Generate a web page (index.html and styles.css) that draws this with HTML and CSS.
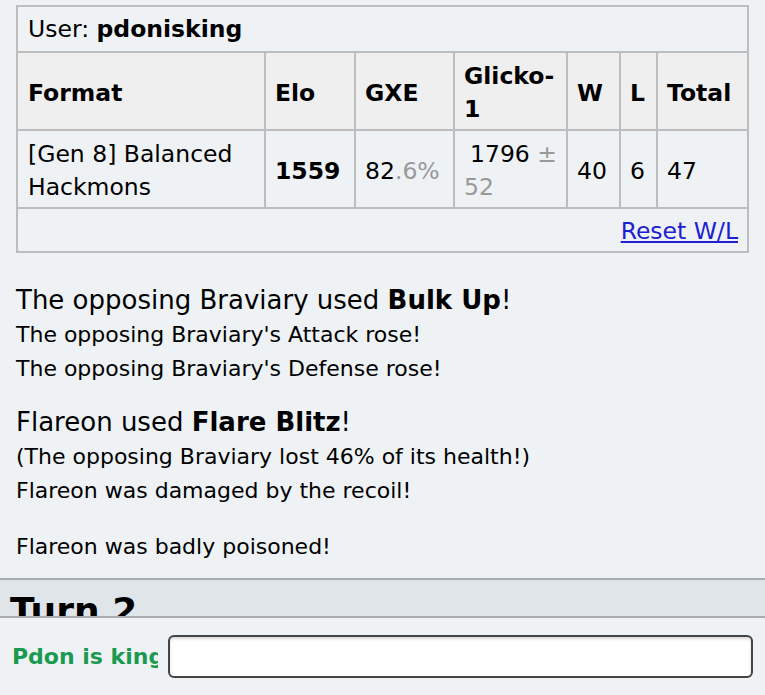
FILE: index.html
```html
<!DOCTYPE html>
<html lang="en">
<head>
    <meta charset="UTF-8">
    <meta name="viewport" content="width=device-width, initial-scale=1.0">
    <title>Battle</title>
    <link rel="stylesheet" href="styles.css">
</head>
<body>

    <div class="battle">
        <div class="log">
            <table class="ladder">
                <colgroup>
                    <col style="width: 248px">
                    <col style="width: 90px">
                    <col style="width: 99px">
                    <col style="width: 113px">
                    <col style="width: 53px">
                    <col style="width: 37px">
                    <col>
                </colgroup>
                <tr>
                    <td colspan="7" class="user">User: <strong>pdonisking</strong></td>
                </tr>
                <tr>
                    <th>Format</th>
                    <th>Elo</th>
                    <th>GXE</th>
                    <th>Glicko-1</th>
                    <th>W</th>
                    <th>L</th>
                    <th>Total</th>
                </tr>
                <tr>
                    <td>[Gen 8] Balanced Hackmons</td>
                    <td><strong>1559</strong></td>
                    <td>82<span class="dim">.6%</span></td>
                    <td class="glicko">1796 <span class="dim">± 52</span></td>
                    <td>40</td>
                    <td>6</td>
                    <td>47</td>
                </tr>
                <tr>
                    <td colspan="7" class="reset"><a href="#">Reset W/L</a></td>
                </tr>
            </table>

            <div class="msg-group">
                <div class="move">The opposing Braviary used <strong>Bulk Up</strong>!</div>
                <div class="line">The opposing Braviary's Attack rose!</div>
                <div class="line">The opposing Braviary's Defense rose!</div>
            </div>

            <div class="msg-group flare">
                <div class="move">Flareon used <strong>Flare Blitz</strong>!</div>
                <div class="line">(The opposing Braviary lost 46% of its health!)</div>
                <div class="line">Flareon was damaged by the recoil!</div>
            </div>

            <div class="msg-group poison">
                <div class="line">Flareon was badly poisoned!</div>
            </div>

            <h2 class="turn">Turn 2</h2>
        </div>

        <div class="chatbar">
            <div class="chat-name">Pdon is king</div>
            <input type="text" class="chat-input">
        </div>
    </div>

</body>
</html>
```

FILE: styles.css
```css
body {
    font-family: 'DejaVu Sans', Verdana, sans-serif;
    background-color: #eef2f5;
    color: #000;
    margin: 0;
    padding: 0;
}

.battle {
    height: 100vh;
    display: flex;
    flex-direction: column;
}

.log {
    flex: 1;
    overflow: hidden;
    padding: 5px 16px 0;
}

/* ladder table */
.ladder {
    width: 100%;
    table-layout: fixed;
    border-collapse: collapse;
    border: 2px solid #bdbdbd;
    font-size: 23.5px;
    line-height: 33px;
}

.ladder td,
.ladder th {
    border: 2px solid #bdbdbd;
    padding: 7px 9px 3px;
    text-align: left;
    vertical-align: middle;
}

.ladder th {
    background-color: #efefef;
    font-weight: bold;
}

.ladder tr td:first-child,
.ladder tr th:first-child {
    padding-left: 10px;
}

.ladder .user {
    padding-top: 6px;
    padding-bottom: 5px;
}

.ladder .glicko {
    padding-right: 6px;
    text-indent: 6px;
}

.ladder .dim {
    color: #999;
}

.ladder .reset {
    text-align: right;
    padding-top: 6px;
    padding-bottom: 3px;
}

.ladder .reset a {
    color: #2020d0;
}

/* battle messages */
.msg-group {
    margin-top: 30px;
}

.msg-group.flare {
    margin-top: 19px;
}

.msg-group.poison {
    margin-top: 22px;
}

.move {
    font-size: 26px;
    line-height: 35px;
}

.line {
    font-size: 22px;
    line-height: 34px;
}

.turn {
    margin: 14px -16px 0;
    padding: 10px 10px 0;
    border-top: 2px solid #aaacae;
    background-color: #dfe5e9;
    font-size: 36px;
    line-height: 42px;
    height: 60px;
}

/* chat bar */
.chatbar {
    height: 77px;
    border-top: 2px solid #aaacae;
    display: flex;
    align-items: center;
    padding: 0 12px;
    gap: 10px;
}

.chat-name {
    width: 146px;
    flex: none;
    overflow: hidden;
    white-space: nowrap;
    color: #1a9a50;
    font-weight: bold;
    font-size: 22px;
}

.chat-input {
    flex: 1;
    height: 43px;
    box-sizing: border-box;
    border: 2px solid #444;
    border-radius: 6px;
    background: #fff;
    box-shadow: inset 0 2px 3px rgba(0, 0, 0, 0.15);
}
```
